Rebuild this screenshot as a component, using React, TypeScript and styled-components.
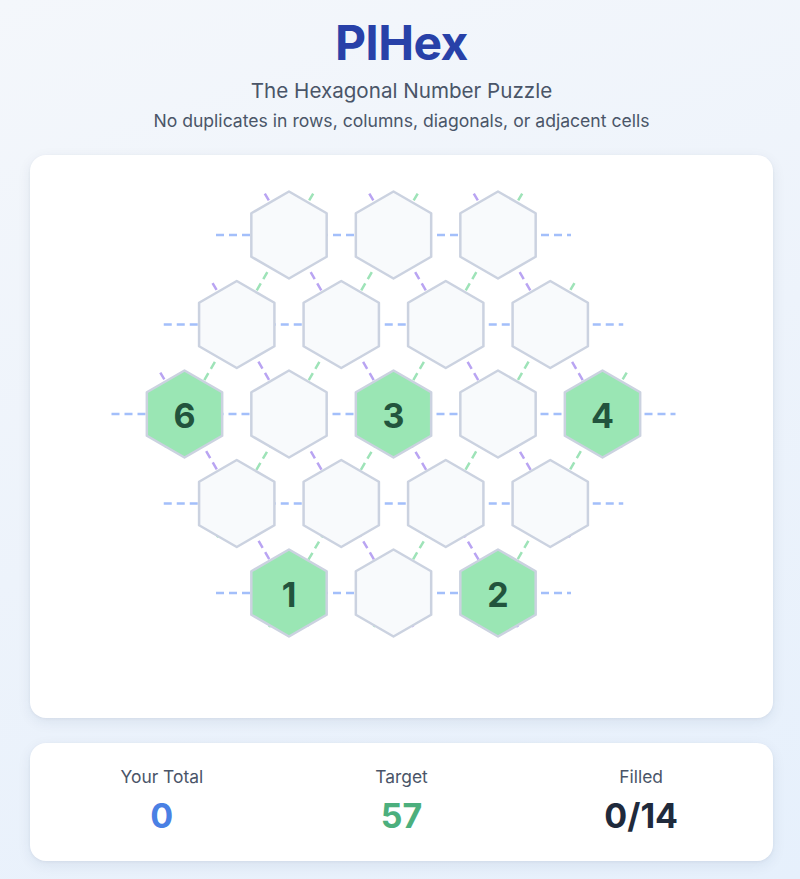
import React from "react";
import styled, { createGlobalStyle } from "styled-components";

const GlobalStyle = createGlobalStyle`
  html, body { margin: 0; padding: 0; }
  body {
    font-family: Inter, "Noto Sans", "Liberation Sans", sans-serif;
    background: #eef3fb;
  }
`;

const Page = styled.div`
  box-sizing: border-box;
  min-height: 879px;
  padding: 14px 27px 18px 30px;
  background: linear-gradient(160deg, #f4f7fb 0%, #edf3fb 50%, #e6f0fc 100%);
`;

const Header = styled.header`
  display: flex;
  flex-direction: column;
  align-items: center;
  text-align: center;
`;

const Title = styled.h1`
  margin: 0;
  font-size: 48px;
  line-height: 58px;
  font-weight: 700;
  color: #2841a8;
  letter-spacing: -0.5px;
`;

const Subtitle = styled.p`
  margin: 7px 0 0;
  font-size: 20.6px;
  line-height: 24px;
  color: #4a5568;
`;

const Rules = styled.p`
  margin: 8px 0 0;
  font-size: 17.6px;
  line-height: 20px;
  color: #4a5568;
`;

const BoardCard = styled.section`
  margin-top: 24px;
  background: #ffffff;
  border-radius: 16px;
  box-shadow: 0 4px 14px rgba(30, 50, 90, 0.08), 0 1px 3px rgba(30, 50, 90, 0.06);
  height: 563px;
  overflow: hidden;
`;

const BoardSvg = styled.svg`
  display: block;
  width: 100%;
  height: 100%;
`;

const StatsCard = styled.section`
  margin-top: 25px;
  background: #ffffff;
  border-radius: 16px;
  box-shadow: 0 4px 14px rgba(30, 50, 90, 0.08), 0 1px 3px rgba(30, 50, 90, 0.06);
  padding: 24px 20px;
  display: grid;
  grid-template-columns: repeat(3, 1fr);
  gap: 16px;
`;

const Stat = styled.div`
  display: flex;
  flex-direction: column;
  align-items: center;
  gap: 7px;
`;

const StatLabel = styled.span`
  font-size: 17.4px;
  line-height: 20px;
  color: #4a5568;
`;

const StatValue = styled.span<{ $color: string }>`
  font-size: 34px;
  line-height: 43px;
  font-weight: 700;
  color: ${(p) => p.$color};
`;

const CellText = styled.text`
  font-family: Inter, "Noto Sans", "Liberation Sans", sans-serif;
  font-size: 34px;
  font-weight: 700;
  fill: #22543d;
`;

const ROWS: (number | null)[][] = [
  [null, null, null],
  [null, null, null, null],
  [6, null, 3, null, 4],
  [null, null, null, null],
  [1, null, 2],
];

const CX = 363.5;
const CY = 259;
const DX = 104.5;
const DY = 89.5;
const R = 43.5;
const H_EXT = 73;
const D_EXT_TOP = 48;
const D_EXT_BOTTOM = 40.5;

const pos = (q: number, r: number) => ({ x: CX + DX * (q + r / 2), y: CY + DY * r });

const hexPoints = (x: number, y: number) =>
  [-90, -30, 30, 90, 150, 210]
    .map((a) => {
      const rad = (a * Math.PI) / 180;
      return `${(x + R * Math.cos(rad)).toFixed(2)},${(y + R * Math.sin(rad)).toFixed(2)}`;
    })
    .join(" ");

type Line = { x1: number; y1: number; x2: number; y2: number; color: string };

function buildLines(): Line[] {
  const lines: Line[] = [];
  for (let r = -2; r <= 2; r++) {
    const qmin = Math.max(-2, -2 - r);
    const qmax = Math.min(2, 2 - r);
    const a = pos(qmin, r);
    const b = pos(qmax, r);
    lines.push({ x1: a.x - H_EXT, y1: a.y, x2: b.x + H_EXT, y2: b.y, color: "#a3bffa" });
  }
  const len = Math.hypot(DX / 2, DY);
  for (let q = -2; q <= 2; q++) {
    const rmin = Math.max(-2, -2 - q);
    const rmax = Math.min(2, 2 - q);
    const a = pos(q, rmin);
    const b = pos(q, rmax);
    const ux = DX / 2 / len;
    const uy = DY / len;
    lines.push({
      x1: a.x - ux * D_EXT_TOP,
      y1: a.y - uy * D_EXT_TOP,
      x2: b.x + ux * D_EXT_BOTTOM,
      y2: b.y + uy * D_EXT_BOTTOM,
      color: "#b9a4f2",
    });
  }
  for (let s = -2; s <= 2; s++) {
    const rmin = Math.max(-2, -2 - s);
    const rmax = Math.min(2, 2 - s);
    const a = pos(-s - rmin, rmin);
    const b = pos(-s - rmax, rmax);
    const ux = -DX / 2 / len;
    const uy = DY / len;
    lines.push({
      x1: a.x - ux * D_EXT_TOP,
      y1: a.y - uy * D_EXT_TOP,
      x2: b.x + ux * D_EXT_BOTTOM,
      y2: b.y + uy * D_EXT_BOTTOM,
      color: "#9ee3b8",
    });
  }
  return lines;
}

const LINES = buildLines();

function Board() {
  const cells: { x: number; y: number; v: number | null }[] = [];
  ROWS.forEach((row, ri) => {
    const r = ri - 2;
    const qmin = Math.max(-2, -2 - r);
    row.forEach((v, i) => {
      const p = pos(qmin + i, r);
      cells.push({ x: p.x, y: p.y, v });
    });
  });
  return (
    <BoardSvg viewBox="0 0 743 563">
      {LINES.map((l, i) => (
        <line key={i} x1={l.x1} y1={l.y1} x2={l.x2} y2={l.y2} stroke={l.color} strokeWidth={2.5} strokeDasharray="8 5" />
      ))}
      {cells.map((c, i) => (
        <g key={i}>
          <polygon
            points={hexPoints(c.x, c.y)}
            fill={c.v !== null ? "#9ae6b4" : "#f8fafc"}
            stroke="#cbd2e0"
            strokeWidth={2.5}
            strokeLinejoin="round"
          />
          {c.v !== null && (
            <CellText x={c.x} y={c.y + 1} textAnchor="middle" dominantBaseline="central">
              {c.v}
            </CellText>
          )}
        </g>
      ))}
    </BoardSvg>
  );
}

export default function App() {
  return (
    <>
      <GlobalStyle />
      <Page>
        <Header>
          <Title>PlHex</Title>
          <Subtitle>The Hexagonal Number Puzzle</Subtitle>
          <Rules>No duplicates in rows, columns, diagonals, or adjacent cells</Rules>
        </Header>
        <BoardCard>
          <Board />
        </BoardCard>
        <StatsCard>
          <Stat>
            <StatLabel>Your Total</StatLabel>
            <StatValue $color="#4a80e4">0</StatValue>
          </Stat>
          <Stat>
            <StatLabel>Target</StatLabel>
            <StatValue $color="#4caf7d">57</StatValue>
          </Stat>
          <Stat>
            <StatLabel>Filled</StatLabel>
            <StatValue $color="#1f2a3c">0/14</StatValue>
          </Stat>
        </StatsCard>
      </Page>
    </>
  );
}
